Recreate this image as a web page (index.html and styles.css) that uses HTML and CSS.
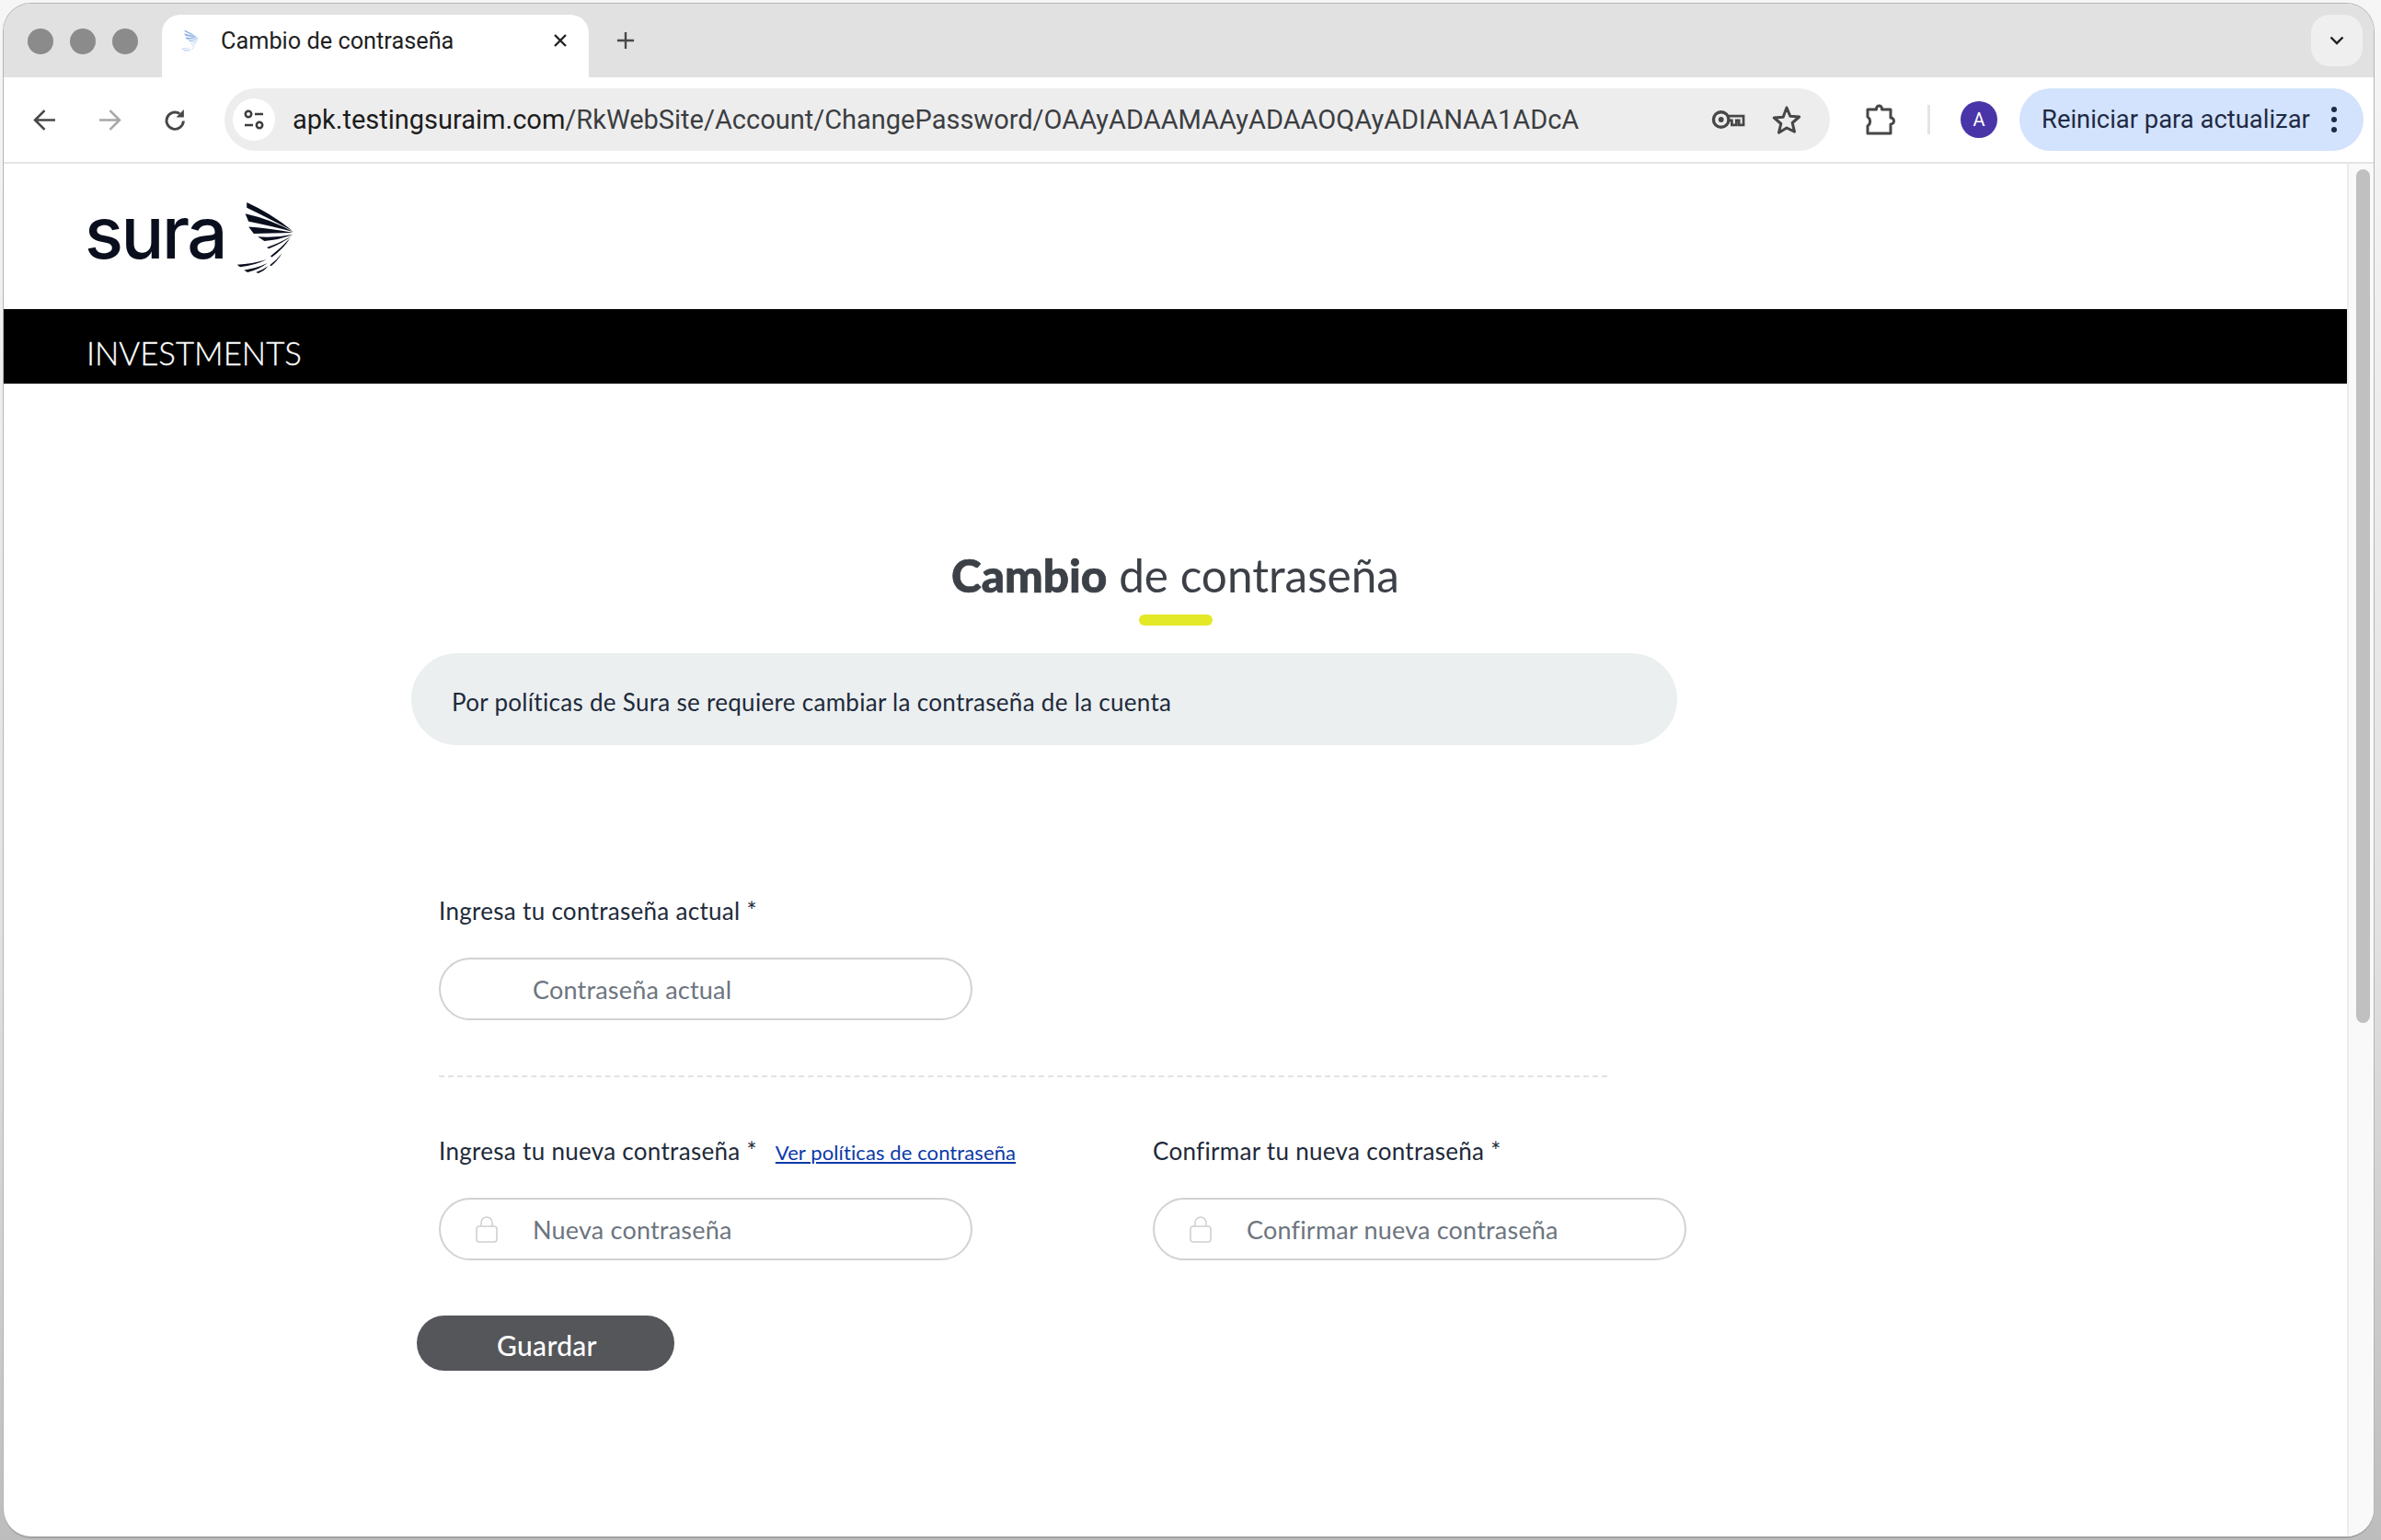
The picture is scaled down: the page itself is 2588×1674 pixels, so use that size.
FILE: index.html
```html
<!DOCTYPE html>
<html lang="es">
<head>
<meta charset="utf-8">
<title>Cambio de contraseña</title>
<link rel="stylesheet" href="styles.css">
</head>
<body>
<svg class="defs" width="0" height="0" aria-hidden="true">
  <symbol id="wing" viewBox="585 50 200 240">
    <path fill="currentColor" d="M622 55Q700 90 772 148Q690 105 622 72Z"/>
    <path fill="currentColor" d="M617 92Q700 110 775 152Q690 130 628 118Z"/>
    <path fill="currentColor" d="M628 135Q700 140 775 155Q700 156 645 158Z"/>
    <path fill="currentColor" d="M658 168Q720 172 775 160Q730 178 680 182Z"/>
    <path fill="currentColor" d="M688 203Q730 190 770 165Q740 190 695 207Z"/>
    <path fill="currentColor" d="M700 232Q735 205 765 172Q745 205 705 235Z"/>
    <path fill="currentColor" d="M698 262Q720 245 738 222Q725 245 702 265Z"/>
    <path fill="currentColor" d="M590 260Q640 258 688 243Q650 262 600 268Z"/>
    <path fill="currentColor" d="M613 278Q655 272 690 255Q665 275 625 285Z"/>
    <path fill="currentColor" d="M652 285Q675 278 692 265Q680 282 660 288Z"/>
  </symbol>
  <symbol id="lock" viewBox="0 0 24 30">
    <rect x="1" y="12" width="22" height="17" rx="3" fill="none" stroke="currentColor" stroke-width="1.6"/>
    <path d="M6 12V8a6 6 0 0 1 12 0v4" fill="none" stroke="currentColor" stroke-width="1.6"/>
  </symbol>
</svg>
<div class="window">
  <div class="tabstrip">
    <div class="lights"><i class="light"></i><i class="light"></i><i class="light"></i></div>
    <div class="tab">
      <svg class="favicon"><use href="#wing"/></svg>
      <span class="tab-title">Cambio de contraseña</span>
      <svg class="tab-close" viewBox="0 0 16 16"><path d="M2 2l12 12M14 2L2 14" stroke="currentColor" stroke-width="2.4" fill="none"/></svg>
    </div>
    <svg class="new-tab" viewBox="0 0 22 22"><path d="M11 1v20M1 11h20" stroke="currentColor" stroke-width="2.6" fill="none"/></svg>
    <div class="tab-menu"><svg class="chevron" viewBox="0 0 16 10"><path d="M1.5 1.5L8 8l6.500-6.500" stroke="currentColor" stroke-width="2.400" fill="none"/></svg></div>
  </div>
  <div class="toolbar">
    <svg class="nav" viewBox="0 0 24 24"><path d="M23 12H3M12 2L2 12l10 10" stroke="currentColor" stroke-width="2.500" fill="none"/></svg>
    <svg class="nav nav-off" viewBox="0 0 24 24"><path d="M1 12h20M12 2l10 10-10 10" stroke="currentColor" stroke-width="2.500" fill="none"/></svg>
    <svg class="nav" viewBox="0 0 24 24"><path d="M20.500 13A8.800 8.800 0 1 1 16.500 5.300" stroke="currentColor" stroke-width="2.800" fill="none"/><path d="M21 1v8h-8z" fill="currentColor"/></svg>
    <div class="omnibox">
      <span class="site-icon"><svg viewBox="0 0 24 24"><circle cx="6" cy="6" r="3.200" fill="none" stroke="currentColor" stroke-width="2.500"/><path d="M13 6h9M2 18h9" stroke="currentColor" stroke-width="2.500" fill="none"/><circle cx="18" cy="18" r="3.200" fill="none" stroke="currentColor" stroke-width="2.500"/></svg></span>
      <span class="url"><span class="url-host">apk.testingsuraim.com</span>/RkWebSite/Account/ChangePassword/OAAyADAAMAAyADAAOQAyADIANAA1ADcA</span>
      <svg class="key" viewBox="0 0 38 24"><circle cx="11" cy="12" r="8.500" fill="none" stroke="currentColor" stroke-width="3.400"/><circle cx="11" cy="12" r="3" fill="currentColor"/><path d="M19 8h17v10h-5v-5h-3v5h-5v-5h-5" fill="none" stroke="currentColor" stroke-width="2.800"/></svg>
      <svg class="star" viewBox="0 0 32 32"><path d="M16 3l3.800 9.200 9.900.8-7.500 6.500 2.300 9.700L16 25l-8.500 5.200 2.300-9.700L2.300 14l9.900-.8z" fill="none" stroke="currentColor" stroke-width="3" stroke-linejoin="round"/></svg>
    </div>
    <svg class="puzzle" viewBox="0 0 34 34"><path d="M4 6h9.500V5a3 3 0 0 1 6 0v1H29v9a3.500 3.500 0 0 1 0 7v10H4v-8a6 6 0 0 0 0-10z" fill="none" stroke="currentColor" stroke-width="3" stroke-linejoin="round"/></svg>
    <i class="divider"></i>
    <span class="avatar">A</span>
    <div class="update-chip">
      <span>Reiniciar para actualizar</span>
      <span class="dots"><i class="dot"></i><i class="dot"></i><i class="dot"></i></span>
    </div>
  </div>
  <div class="viewport">
    <div class="page">
      <header class="brand">
        <span class="logo-text">sura</span>
        <svg class="logo-wing"><use href="#wing"/></svg>
      </header>
      <div class="blackbar">INVESTMENTS</div>
      <main class="content">
        <h1 class="title"><b>Cambio</b> de contraseña</h1>
        <div class="title-bar"></div>
        <div class="notice">Por políticas de Sura se requiere cambiar la contraseña de la cuenta</div>
        <form class="form">
          <div class="field">
            <label class="label">Ingresa tu contraseña actual *</label>
            <div class="input-wrap"><span class="icon-slot"></span><input class="input" type="password" placeholder="Contraseña actual"></div>
          </div>
          <hr class="dashed">
          <div class="row">
            <div class="field">
              <div class="label">
                <label>Ingresa tu nueva contraseña *</label>
                <a class="policy-link" href="#">Ver políticas de contraseña</a>
              </div>
              <div class="input-wrap"><span class="icon-slot"><svg class="lock"><use href="#lock"/></svg></span><input class="input" type="password" placeholder="Nueva contraseña"></div>
            </div>
            <div class="field">
              <label class="label">Confirmar tu nueva contraseña *</label>
              <div class="input-wrap"><span class="icon-slot"><svg class="lock"><use href="#lock"/></svg></span><input class="input" type="password" placeholder="Confirmar nueva contraseña"></div>
            </div>
          </div>
          <button class="save" type="button">Guardar</button>
        </form>
      </main>
    </div>
    <div class="scrollbar"><i class="thumb"></i></div>
  </div>
</div>
</body>
</html>
```
FILE: styles.css
```css
* { box-sizing: border-box; }
html, body { height: 100%; }
body {
  margin: 0;
  padding: 4px 8px 4px 4px;
  overflow: hidden;
  background: linear-gradient(#f6f6f6, #e2e2e2 60%, #bdbdbd);
  font-family: "Lato", "Liberation Sans", sans-serif;
}
.defs { position: absolute; }
.window {
  height: 1666px;
  display: flex;
  flex-direction: column;
  background: #fff;
  border-radius: 30px;
  overflow: hidden;
  box-shadow: 0 0 0 1px #b5b5b5, 0 2px 0 #989898;
}
.tabstrip {
  height: 80px;
  flex: none;
  display: flex;
  align-items: flex-end;
  background: #e1e1e1;
}
.lights { display: flex; gap: 18px; align-self: flex-start; padding: 27px 0 0 26px; width: 172px; }
.light { width: 28px; height: 28px; border-radius: 50%; background: #8b8b8b; flex: none; }
.tab {
  width: 464px;
  height: 68px;
  display: flex;
  align-items: center;
  padding: 0 23px 12px 21px;
  background: #fff;
  border-radius: 20px 20px 0 0;
}
.favicon { width: 20px; height: 24px; color: #8fb2e3; flex: none; }
.tab-title { margin-left: 23px; flex: 1; font: 25.3px "Roboto", "Liberation Sans", sans-serif; color: #1f1f1f; }
.tab-close { width: 16px; height: 16px; color: #222; }
.new-tab { width: 20px; height: 20px; margin: 0 0 30px 30px; color: #474747; }
.tab-menu {
  margin: 0 12px 12px auto;
  width: 56px;
  height: 56px;
  display: flex;
  align-items: center;
  justify-content: center;
  background: #efefef;
  border-radius: 20px;
}
.chevron { width: 16px; height: 10px; color: #1f1f1f; }
.toolbar {
  height: 94px;
  flex: none;
  display: flex;
  align-items: center;
  padding: 0 12px 0 32px;
  background: #fff;
  border-bottom: 2px solid #e4e4e4;
  border-radius: 16px 16px 0 0;
  position: relative;
}
.nav { width: 25px; height: 25px; color: #474747; margin-right: 46px; flex: none; }
.nav-off { color: #a8a8a8; }
.nav + .nav + .nav { margin-right: 41px; }
.omnibox {
  width: 1745px;
  height: 68px;
  flex: none;
  display: flex;
  align-items: center;
  padding: 0 31px 0 9px;
  background: #eeeded;
  border-radius: 34px;
}
.site-icon { width: 46px; height: 46px; border-radius: 50%; background: #fff; display: flex; align-items: center; justify-content: center; color: #3c3c3c; flex: none; }
.site-icon svg { width: 24px; height: 24px; }
.url { margin-left: 19px; flex: 1; font: 29px "Roboto", "Liberation Sans", sans-serif; color: #3b3e42; white-space: nowrap; }
.url-host { color: #1c1c1c; }
.key { width: 37px; height: 24px; color: #474747; flex: none; }
.star { width: 32px; height: 32px; color: #474747; flex: none; margin-left: 29px; }
.puzzle { width: 34px; height: 34px; color: #474747; margin-left: 37px; flex: none; }
.divider { width: 3px; height: 32px; background: #e4e4e4; margin-left: 35px; flex: none; }
.avatar {
  width: 40px; height: 40px; margin-left: 33px; flex: none;
  display: flex; align-items: center; justify-content: center;
  border-radius: 50%; background: #4a35a8; color: #fff;
  font: 20px "Roboto", "Liberation Sans", sans-serif;
}
.update-chip {
  width: 374px; height: 68px; margin-left: 24px; flex: none;
  display: flex; align-items: center; justify-content: space-between;
  padding: 0 29px 0 24px;
  background: #d3e3fd; border-radius: 34px;
  color: #1f2a44;
  font: 27.4px "Roboto", "Liberation Sans", sans-serif;
}
.dots { display: flex; flex-direction: column; gap: 5px; }
.dot { width: 6px; height: 6px; border-radius: 50%; background: #1f2a44; }
.viewport { flex: 1; display: flex; min-height: 0; }
.page { flex: 1; min-width: 0; }
.brand { height: 158px; position: relative; display: flex; align-items: flex-start; padding: 36px 0 0 88px; }
.logo-text {
  font: 500 78px/1 "Inter", sans-serif;
  color: #0a0f1e;
  letter-spacing: -2.5px;
}
.logo-wing { position: absolute; left: 252px; top: 40px; width: 66px; height: 80px; color: #0a0f1e; }
.blackbar {
  height: 81px;
  padding: 28px 0 0 90px;
  background: #000;
  color: #fff;
  font-size: 34.8px;
  line-height: 40px;
  font-weight: 300;
  -webkit-text-stroke: .3px #fff;
}
.content { display: flex; flex-direction: column; }
.title {
  margin: 178px 0 0;
  text-align: center;
  font-size: 49.5px;
  line-height: 60px;
  font-weight: 400;
  color: #3c4047;
}
.title b { font-weight: 900; -webkit-text-stroke: .7px #3c4047; }
.title-bar { width: 80px; height: 12px; margin: 13px auto 0; background: #e3e827; border-radius: 6px; }
.notice {
  width: 1376px;
  height: 100px;
  margin: 30px 0 0 443px;
  padding: 37px 0 0 44px;
  background: #ebeff0;
  border-radius: 50px;
  color: #1e2a3a;
  font-size: 26px;
  letter-spacing: .3px;
  line-height: 32px;
}
.form { margin: 164px 0 0 473px; width: 1360px; display: flex; flex-direction: column; align-items: flex-start; }
.field { width: 580px; display: flex; flex-direction: column; }
.label { display: flex; align-items: baseline; height: 32px; color: #1e2a3a; font-size: 26px; letter-spacing: .3px; line-height: 32px; white-space: nowrap; }
.policy-link { margin-left: 20px; color: #0a3aa8; font-size: 22px; letter-spacing: .1px; }
.input-wrap {
  height: 68px;
  margin-top: 35px;
  display: flex;
  align-items: center;
  border: 2px solid #d2d2d4;
  border-radius: 34px;
}
.icon-slot { width: 100px; height: 30px; flex: none; padding-left: 38px; display: flex; }
.lock { width: 24px; height: 30px; color: #d0d0d2; }
.input {
  flex: 1; min-width: 0;
  border: 0; outline: 0; padding: 0; background: transparent;
  font: 27px "Lato", sans-serif;
  letter-spacing: .2px;
  color: #6d7580;
}
.input::placeholder { color: #6d7580; opacity: 1; }
.dashed { width: 1270px; margin: 60px 0 64px; border: 0; border-top: 2px dashed #e3e3e3; }
.row { display: flex; gap: 196px; }
.save {
  width: 280px; height: 60px;
  margin: 60px 0 0 -24px;
  border: 0; border-radius: 30px;
  background: #55565a;
  color: #fff;
  font: 500 30px "Lato", sans-serif;
  letter-spacing: .3px;
  padding: 4px 0 0 3px;
}
.scrollbar { width: 29px; flex: none; padding: 6px 6px 0 8px; background: #f9f9f9; border-left: 2px solid #ececec; }
.thumb { display: block; width: 15px; height: 928px; background: #c0c0c0; border-radius: 8px; }
```
